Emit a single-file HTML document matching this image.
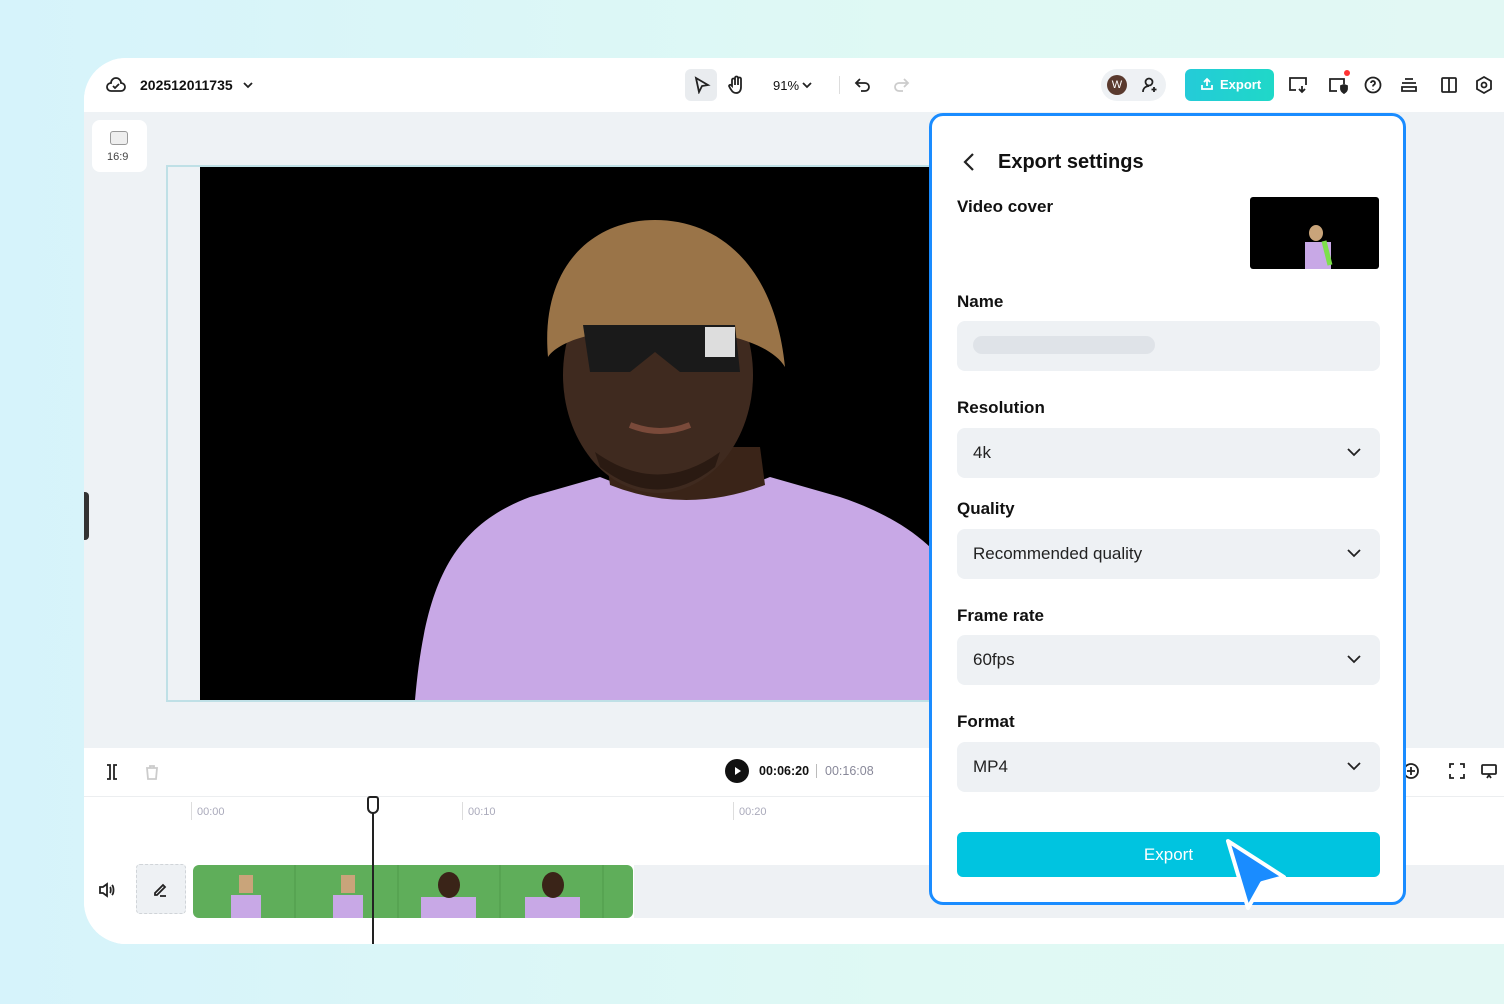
<!DOCTYPE html>
<html><head><meta charset="utf-8"><style>
*{box-sizing:border-box;margin:0;padding:0}
body{width:1504px;height:1004px;overflow:hidden;font-family:"Liberation Sans",sans-serif;background:linear-gradient(90deg,#d6f3fb,#dff9f4 60%,#e2f8f4);position:relative}
.card{position:absolute;left:84px;top:58px;width:1420px;height:886px;background:#fff;border-radius:42px 0 0 42px;overflow:hidden}
.top{position:absolute;left:0;top:0;width:100%;height:54px;background:#fff}
.canvas{position:absolute;left:0;top:54px;width:100%;height:636px;background:#eef2f5}
.tl{position:absolute;left:0;top:690px;width:100%;height:196px;background:#fff}
.abs{position:absolute}
.panel{position:absolute;left:929px;top:113px;width:477px;height:792px;background:#fff;border:3px solid #1a8cff;border-radius:14px}
.lbl{position:absolute;left:25px;font-size:17px;color:#111;font-weight:bold}
.sel{position:absolute;left:25px;width:423px;height:50px;background:#eef1f4;border-radius:8px;font-size:17px;color:#222;padding:15px 16px}
.sel svg{position:absolute;right:18px;top:18px}
.ic{position:absolute;stroke:#222;fill:none;stroke-width:1.8}
</style></head><body>
<div class="card">
 <div class="top">
  <svg class="ic" style="left:22px;top:18px" width="20" height="18" viewBox="0 0 20 18"><path d="M5 15h10a4 4 0 0 0 0-8 5 5 0 0 0-10 0 4 4 0 0 0 0 8z"/><path d="M7 10l2 2 4-4"/></svg>
  <div class="abs" style="left:56px;top:19px;font-size:14px;font-weight:bold;color:#111">202512011735</div>
  <svg class="ic" style="left:158px;top:22px" width="12" height="10"><path d="M2 3l4 4 4-4"/></svg>
  <div class="abs" style="left:601px;top:11px;width:32px;height:32px;background:#e9ecef;border-radius:6px"></div>
  <svg class="ic" style="left:609px;top:18px" width="18" height="18"><path d="M3 2l12 7-6 1-3 6z"/></svg>
  <svg class="ic" style="left:643px;top:17px" width="18" height="20"><path d="M5 11V5a1.5 1.5 0 0 1 3 0v5V3a1.5 1.5 0 0 1 3 0v7V4a1.5 1.5 0 0 1 3 0v8c0 4-2 6-5 6s-4-2-6-5l-1-2a1.3 1.3 0 0 1 2-1z"/></svg>
  <div class="abs" style="left:689px;top:20px;font-size:13px;color:#111">91%</div>
  <svg class="ic" style="left:717px;top:22px" width="12" height="10"><path d="M2 3l4 4 4-4"/></svg>
  <div class="abs" style="left:755px;top:18px;width:1px;height:18px;background:#ddd"></div>
  <svg class="ic" style="left:770px;top:18px" width="18" height="18"><path d="M6 3L2 7l4 4M2 7h9a4 4 0 0 1 0 8H7"/></svg>
  <svg class="ic" style="left:808px;top:18px;stroke:#ccc" width="18" height="18"><path d="M12 3l4 4-4 4M16 7H7a4 4 0 0 0 0 8h4"/></svg>
  <div class="abs" style="left:1017px;top:11px;width:65px;height:32px;background:#eef1f4;border-radius:16px"></div>
  <div class="abs" style="left:1023px;top:17px;width:20px;height:20px;background:#5a3a2e;border-radius:50%;color:#fff;font-size:11px;text-align:center;line-height:20px">W</div>
  <svg class="ic" style="left:1057px;top:18px" width="18" height="18"><circle cx="8" cy="6" r="3.5"/><path d="M2 16c0-4 3-6 6-6M13 11v5M10.5 13.5h5"/></svg>
  <div class="abs" style="left:1101px;top:11px;width:89px;height:32px;background:linear-gradient(90deg,#24cbd8,#1fd8c8);border-radius:6px;color:#fff;font-weight:bold;font-size:13px;line-height:32px;padding-left:35px">Export</div>
  <svg class="ic" style="left:1116px;top:19px;stroke:#fff" width="14" height="14"><path d="M7 9V2M4 5l3-3 3 3M2 8v4h10V8"/></svg>
  <svg class="ic" style="left:1204px;top:18px" width="20" height="18"><path d="M8 14H2V2h16v7M14 10v6M11 13l3 3 3-3"/></svg>
  <svg class="ic" style="left:1244px;top:18px" width="20" height="18"><path d="M9 15H2V3h14v5"/><path d="M13 10l3-1 3 1v3c0 2-3 4-3 4s-3-2-3-4z" fill="#222"/></svg>
  <div class="abs" style="left:1260px;top:12px;width:6px;height:6px;background:#f33;border-radius:50%"></div>
  <svg class="ic" style="left:1280px;top:18px" width="18" height="18"><circle cx="9" cy="9" r="7.5"/><path d="M7 7a2 2 0 1 1 2.5 2c-.5.3-.5.7-.5 1.5M9 13v.5"/></svg>
  <svg class="ic" style="left:1316px;top:19px" width="18" height="16"><path d="M5 2h8M2 6h14M2 10h14v4H2z"/></svg>
  <svg class="ic" style="left:1356px;top:18px" width="18" height="18"><rect x="2" y="2" width="14" height="14" rx="1"/><path d="M9 2v14"/></svg>
  <svg class="ic" style="left:1391px;top:17px" width="18" height="20"><path d="M9 2l7 4v8l-7 4-7-4V6z"/><circle cx="9" cy="10" r="2.5"/></svg>
 </div>
 <div class="canvas">
  <div class="abs" style="left:8px;top:8px;width:55px;height:52px;background:#fff;border-radius:8px"></div>
  <div class="abs" style="left:26px;top:19px;width:18px;height:14px;border:1.5px solid #999;border-radius:3px;background:#eee"></div>
  <div class="abs" style="left:23px;top:39px;font-size:11px;color:#444">16:9</div>
  <div class="abs" style="left:82px;top:53px;width:770px;height:537px;border:2px solid #bfe0e6;background:#eef2f5"></div>
  <div class="abs" style="left:116px;top:55px;width:760px;height:533px;background:#000;overflow:hidden">
   <svg width="760" height="533" viewBox="0 0 760 533">
    <path d="M215 533C225 420 250 360 330 330L400 310Q485 345 570 310L640 330C700 350 740 380 760 420V533Z" fill="#c8a8e6"/>
    <path d="M405 280L410 318Q485 348 565 318L560 280Z" fill="#3a2418"/>
    <ellipse cx="458" cy="208" rx="95" ry="118" fill="#3f2a1f"/>
    <path d="M395 285Q458 330 520 285L515 300Q458 345 400 300Z" fill="#2a1a12"/>
    <path d="M348 190C340 100 392 53 455 53C520 53 575 100 585 200C555 150 375 150 348 190Z" fill="#9a7448"/>
    <path d="M383 158H535L540 205H480L455 185L430 205H390Z" fill="#1a1a1a"/>
    <rect x="505" y="160" width="30" height="30" fill="#ddd"/>
    <path d="M430 258Q460 270 490 258" stroke="#7a4a3a" stroke-width="6" fill="none"/>
   </svg>
  </div>
  <div class="abs" style="left:0;top:380px;width:5px;height:48px;background:#333;border-radius:0 4px 4px 0"></div>
 </div>
 <div class="tl">
  <div class="abs" style="left:0;top:48px;width:100%;height:1px;background:#eceef0"></div>
  <svg class="ic" style="left:20px;top:15px" width="16" height="18"><path d="M3 2h3v14H3M13 2h-3v14h3"/></svg>
  <svg class="ic" style="left:60px;top:15px;stroke:#ccc" width="16" height="18"><path d="M3 5h10l-1 11H4zM6 5V3h4v2"/></svg>
  <div class="abs" style="left:641px;top:11px;width:24px;height:24px;background:#111;border-radius:50%"></div>
  <div class="abs" style="left:651px;top:19px;border-left:6px solid #fff;border-top:4px solid transparent;border-bottom:4px solid transparent"></div>
  <div class="abs" style="left:675px;top:16px;font-size:12.5px;font-weight:bold;color:#111">00:06:20</div>
  <div class="abs" style="left:732px;top:16px;width:1px;height:14px;background:#bbb"></div>
  <div class="abs" style="left:741px;top:16px;font-size:12.5px;color:#889">00:16:08</div>
  <div class="abs" style="left:107px;top:54px;width:1px;height:18px;background:#ddd"></div>
  <div class="abs" style="left:113px;top:58px;font-size:11px;color:#aab">00:00</div>
  <div class="abs" style="left:378px;top:54px;width:1px;height:18px;background:#ddd"></div>
  <div class="abs" style="left:384px;top:58px;font-size:11px;color:#aab">00:10</div>
  <div class="abs" style="left:649px;top:54px;width:1px;height:18px;background:#ddd"></div>
  <div class="abs" style="left:655px;top:58px;font-size:11px;color:#aab">00:20</div>
  <svg class="ic" style="left:14px;top:134px" width="18" height="16"><path d="M2 5h3l4-3v12l-4-3H2zM12 5c1 1 1 5 0 6M14 3c2 2 2 8 0 10"/></svg>
  <div class="abs" style="left:52px;top:116px;width:50px;height:50px;background:#eef1f4;border:1px dashed #d0d4d8;border-radius:4px"></div>
  <svg class="ic" style="left:68px;top:133px" width="16" height="16"><path d="M3 12l8-8 2 2-8 8H3zM8 15h6"/></svg>
  <div class="abs" style="left:109px;top:117px;width:440px;height:53px;background:#5fae5a;border-radius:6px;overflow:hidden">
   <svg width="440" height="53"><g fill="#c8a8e6"><rect x="38" y="30" width="30" height="23"/><rect x="140" y="30" width="30" height="23"/><rect x="228" y="32" width="55" height="21"/><rect x="332" y="32" width="55" height="21"/></g><g fill="#3a2418"><ellipse cx="256" cy="20" rx="11" ry="13"/><ellipse cx="360" cy="20" rx="11" ry="13"/></g><g fill="#c9a47a"><rect x="46" y="10" width="14" height="18"/><rect x="148" y="10" width="14" height="18"/></g><g stroke="#4f9a4a"><path d="M102 0v53M205 0v53M307 0v53M410 0v53"/></g></svg>
  </div>
  <div class="abs" style="left:550px;top:117px;width:870px;height:53px;background:#eef1f4"></div>
  <div class="abs" style="left:288px;top:58px;width:2px;height:140px;background:#222"></div>
  <div class="abs" style="left:283px;top:48px;width:12px;height:18px;border:2px solid #222;background:#fff;border-radius:3px 3px 6px 6px"></div>
  <svg class="ic" style="left:1318px;top:14px" width="18" height="18"><circle cx="9" cy="9" r="7"/><path d="M9 5v8M5 9h8"/></svg>
  <svg class="ic" style="left:1364px;top:14px" width="18" height="18"><path d="M2 6V2h4M12 2h4v4M16 12v4h-4M6 16H2v-4"/></svg>
  <svg class="ic" style="left:1396px;top:14px" width="18" height="18"><rect x="2" y="3" width="14" height="9" rx="1"/><path d="M7 16l2-3 2 3"/></svg>
 </div>
</div>
<div class="panel">
 <svg class="ic" style="left:30px;top:36px;stroke-width:2.2" width="14" height="20"><path d="M11 2L3 10l8 8"/></svg>
 <div class="abs" style="left:66px;top:35px;font-size:20px;font-weight:bold;color:#111">Export settings</div>
 <div class="lbl" style="top:81px">Video cover</div>
 <div class="abs" style="left:318px;top:81px;width:129px;height:72px;background:#000;border-radius:3px;overflow:hidden">
  <svg width="129" height="72"><rect x="55" y="45" width="26" height="27" fill="#c8a8e6"/><ellipse cx="66" cy="36" rx="7" ry="8" fill="#c9a47a"/><path d="M74 44l6 24" stroke="#7de04a" stroke-width="5"/></svg>
 </div>
 <div class="lbl" style="top:176px">Name</div>
 <div class="sel" style="top:205px"><div style="width:182px;height:18px;background:#dfe3e8;border-radius:9px;margin-top:0"></div></div>
 <div class="lbl" style="top:282px">Resolution</div>
 <div class="sel" style="top:312px">4k<svg class="ic" width="16" height="12"><path d="M2 3l6 6 6-6"/></svg></div>
 <div class="lbl" style="top:383px">Quality</div>
 <div class="sel" style="top:413px">Recommended quality<svg class="ic" width="16" height="12"><path d="M2 3l6 6 6-6"/></svg></div>
 <div class="lbl" style="top:490px">Frame rate</div>
 <div class="sel" style="top:519px">60fps<svg class="ic" width="16" height="12"><path d="M2 3l6 6 6-6"/></svg></div>
 <div class="lbl" style="top:596px">Format</div>
 <div class="sel" style="top:626px">MP4<svg class="ic" width="16" height="12"><path d="M2 3l6 6 6-6"/></svg></div>
 <div class="abs" style="left:25px;top:716px;width:423px;height:45px;background:#00c4e0;border-radius:6px;color:#fff;font-size:17px;text-align:center;line-height:45px">Export</div>
</div>
<svg class="abs" style="left:1222px;top:836px" width="70" height="80" viewBox="0 0 70 80"><path d="M6 5l56 36-22 6-14 25z" fill="#1a8cff" stroke="#fff" stroke-width="4" stroke-linejoin="round"/></svg>
</body></html>
